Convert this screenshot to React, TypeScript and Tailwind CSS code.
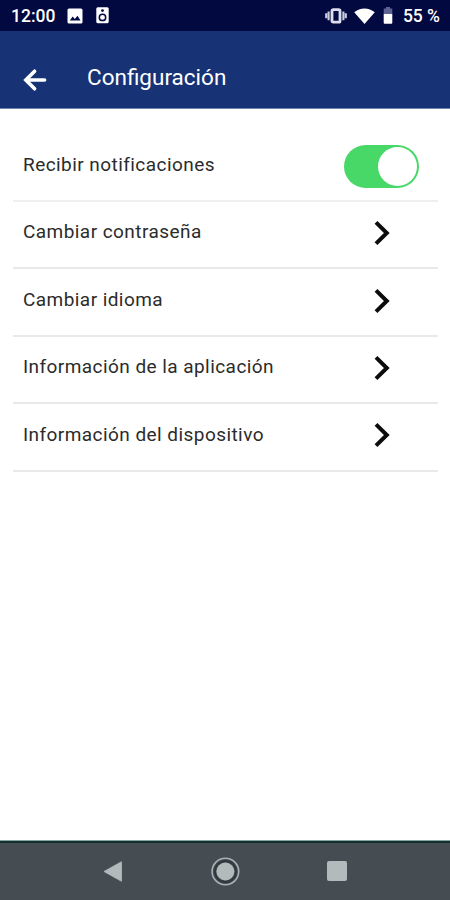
import React from "react";

function StatusBar() {
  return (
    <div className="flex h-[31px] items-center bg-[#020940] text-white">
      <span className="ml-[11px] w-[45px] whitespace-nowrap pt-[2px] text-[17.5px] leading-[31px] font-medium">12:00</span>
      <svg className="ml-[11px] h-[16px] w-[16px]" viewBox="0 0 16 16">
        <rect x="0.5" y="0.5" width="15" height="15" rx="1.5" fill="#fff" />
        <path d="M2.8 12.4 5.7 8.6l2.1 2.5 2.7-3.3 3 4.6z" fill="#020940" />
      </svg>
      <svg className="ml-[13px] h-[17px] w-[13px]" viewBox="0 0 13 17">
        <rect x="0.3" y="0.3" width="12.4" height="16" rx="1.5" fill="#fff" />
        <circle cx="6.5" cy="3.6" r="1.4" fill="#020940" />
        <circle cx="6.5" cy="10.4" r="3.2" fill="#fff" stroke="#020940" strokeWidth="1.5" />
      </svg>
      <div className="flex-1" />
      <svg className="h-[16px] w-[22px]" viewBox="0 0 22 16">
        <path d="M1.2 5.2v5M3.6 3.4v8.8M18.4 3.4v8.8M20.8 5.2v5" stroke="#c9cddf" strokeWidth="2.1" />
        <rect x="7" y="1.6" width="8" height="12.6" rx="1.2" fill="none" stroke="#dcdfeb" strokeWidth="2.8" />
      </svg>
      <svg className="ml-[7px] h-[16px] w-[21px]" viewBox="0 0 21 16">
        <path d="M0.2 4.2C6-0.9 15-0.9 20.8 4.2L10.5 16z" fill="#fff" />
      </svg>
      <svg className="ml-[8px] h-[17px] w-[10px]" viewBox="0 0 10 17">
        <path d="M3 0h4v1.4h2.3V7H0.7V1.4H3z" fill="#5d6291" />
        <path d="M0.7 7h8.6v8.7a1 1 0 0 1-1 1H1.7a1 1 0 0 1-1-1z" fill="#fff" />
      </svg>
      <span className="mr-[9px] ml-[10px] w-[38px] whitespace-nowrap pt-[2px] text-[17.5px] leading-[31px] font-medium tracking-[-0.1px]">55 %</span>
    </div>
  );
}

function Header() {
  return (
    <header className="flex h-[78px] items-center border-b border-[#6f80ab] bg-[#173375] pt-[17px] text-white">
      <svg className="mt-[3px] ml-[23px] h-[24px] w-[24px]" viewBox="0 0 24 24">
        <path d="M21.6 12H3.2M11.6 3.2 2.8 12l8.8 8.8" fill="none" stroke="#fff" strokeWidth="3.6" strokeLinecap="round" />
      </svg>
      <h1 className="mb-[2px] ml-[40px] text-[22.5px] leading-[30px] font-normal">Configuración</h1>
    </header>
  );
}

const items = [
  "Cambiar contraseña",
  "Cambiar idioma",
  "Información de la aplicación",
  "Información del dispositivo",
];

export default function App() {
  return (
    <div className="flex h-[900px] w-[450px] flex-col overflow-hidden bg-white font-['Roboto',sans-serif]">
      <StatusBar />
      <Header />
      <main className="mr-[12px] ml-[13px] flex flex-1 flex-col text-[19px] tracking-[0.44px] text-[#2b2b2b]">
        <div className="flex h-[93px] items-center justify-between border-b-2 border-[#efefef] pt-[23px] pr-[19px] pl-[10px]">
          <span className="mb-[2px]">Recibir notificaciones</span>
          <button aria-label="Recibir notificaciones" className="mt-px flex h-[43px] w-[75px] items-center justify-end rounded-full bg-[#48d868] pr-[2px]">
            <span className="size-[39px] rounded-full bg-white" />
          </button>
        </div>
        {items.map((label) => (
          <div key={label} className="flex h-[67.4px] items-center justify-between border-b-2 border-[#e9e9e9] pr-[48px] pb-[3px] pl-[10px]">
            <span className="mb-px">{label}</span>
            <svg className="h-[26px] w-[16px]" viewBox="0 0 16 26">
              <path d="M2 2.4 12.8 13 2 23.6" fill="none" stroke="#0c0c0c" strokeWidth="4" />
            </svg>
          </div>
        ))}
      </main>
      <div className="h-px bg-[#87a3a2]" />
      <nav className="flex h-[59px] items-center border-t-2 border-[#12302f] bg-[#454d52]">
        <svg className="ml-[103px] h-[22px] w-[20px]" viewBox="0 0 20 22">
          <path d="M1 10.5 18.5 0.7v19.6z" fill="#b3babb" stroke="#b3babb" strokeWidth="0.8" strokeLinejoin="round" />
        </svg>
        <svg className="ml-[87px] h-[30px] w-[30px]" viewBox="0 0 30 30">
          <circle cx="15.4" cy="14.5" r="13.3" fill="none" stroke="#a9b1b3" strokeWidth="1.6" />
          <circle cx="15.4" cy="14.5" r="10.5" fill="none" stroke="#303a3e" strokeWidth="2" />
          <circle cx="15.4" cy="14.5" r="9" fill="#b3babb" />
        </svg>
        <span className="mb-[2px] ml-[87px] size-[20px] rounded-[2px] bg-[#b3babb]" />
      </nav>
    </div>
  );
}
